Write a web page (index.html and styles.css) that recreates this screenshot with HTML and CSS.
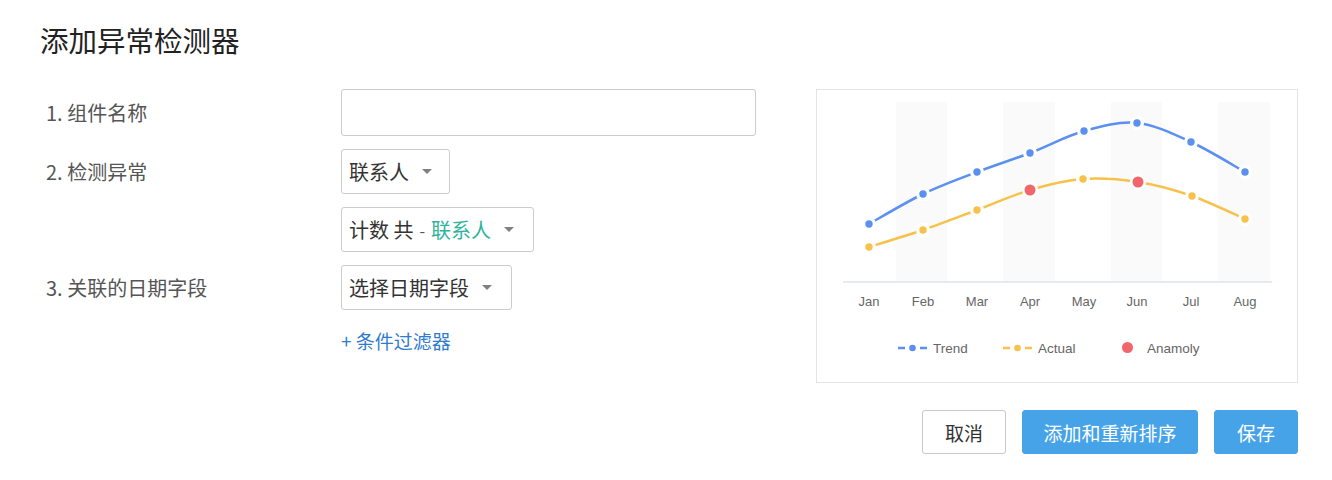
FILE: index.html
```html
<!DOCTYPE html>
<html lang="zh-CN">
<head>
<meta charset="utf-8">
<title>添加异常检测器</title>
<link rel="stylesheet" href="styles.css">
</head>
<body>
<div class="page">
  <h1 class="title">添加异常检测器</h1>
  <div class="main">
    <div class="form">
      <div class="row">
        <div class="label">1. 组件名称</div>
        <input class="text-input" type="text">
      </div>
      <div class="row">
        <div class="label">2. 检测异常</div>
        <div class="select">联系人<span class="caret"></span></div>
      </div>
      <div class="row">
        <div class="label"></div>
        <div class="select select-wide">计数 共<span class="dash">-</span><span class="green">联系人</span><span class="caret"></span></div>
      </div>
      <div class="row">
        <div class="label">3. 关联的日期字段</div>
        <div class="select select-wide">选择日期字段<span class="caret"></span></div>
      </div>
      <div class="row">
        <div class="label"></div>
        <a class="link" href="#">+ 条件过滤器</a>
      </div>
    </div>
    <div class="chart">
      <svg width="480" height="292" viewBox="817 90 480 292" xmlns="http://www.w3.org/2000/svg">
        <g fill="#fafafa">
          <rect x="896" y="102" width="51" height="180"/>
          <rect x="1003" y="102" width="52" height="180"/>
          <rect x="1111" y="102" width="51" height="180"/>
          <rect x="1218" y="102" width="52" height="180"/>
        </g>
        <line x1="843" y1="282" x2="1272" y2="282" stroke="#dfe3e9" stroke-width="1.5"/>
        <g class="axis">
          <text x="869" y="305.5">Jan</text>
          <text x="923" y="305.5">Feb</text>
          <text x="977" y="305.5">Mar</text>
          <text x="1030" y="305.5">Apr</text>
          <text x="1084" y="305.5">May</text>
          <text x="1137" y="305.5">Jun</text>
          <text x="1191" y="305.5">Jul</text>
          <text x="1245" y="305.5">Aug</text>
        </g>
        <path d="M869 224 C878 219 905 202.7 923 194 C941 185.3 959.2 178.8 977 172 C994.8 165.2 1012.2 159.8 1030 153 C1047.8 146.2 1066.2 136 1084 131 C1101.8 126 1119.2 121.2 1137 123 C1154.8 124.8 1173 133.8 1191 142 C1209 150.2 1236 167 1245 172" fill="none" stroke="#5b8ff0" stroke-width="2.5"/>
        <path d="M869 247 C878 244.2 905 236.2 923 230 C941 223.8 959.2 216.7 977 210 C994.8 203.3 1012.3 195.2 1030 190 C1047.7 184.8 1065 180.3 1083 179 C1101 177.7 1119.8 179.2 1138 182 C1156.2 184.8 1174.2 189.8 1192 196 C1209.8 202.2 1236.2 215.2 1245 219" fill="none" stroke="#f7c14a" stroke-width="2.5"/>
        <g fill="#fff">
          <circle cx="869" cy="224" r="7"/><circle cx="923" cy="194" r="7"/><circle cx="977" cy="172" r="7"/><circle cx="1030" cy="153" r="7"/>
          <circle cx="1084" cy="131" r="7"/><circle cx="1137" cy="123" r="7"/><circle cx="1191" cy="142" r="7"/><circle cx="1245" cy="172" r="7"/>
          <circle cx="869" cy="247" r="7"/><circle cx="923" cy="230" r="7"/><circle cx="977" cy="210" r="7"/><circle cx="1030" cy="190" r="8"/>
          <circle cx="1083" cy="179" r="7"/><circle cx="1138" cy="182" r="8"/><circle cx="1192" cy="196" r="7"/><circle cx="1245" cy="219" r="7"/>
        </g>
        <g fill="#5b8ff0">
          <circle cx="869" cy="224" r="3.7"/><circle cx="923" cy="194" r="3.7"/><circle cx="977" cy="172" r="3.7"/><circle cx="1030" cy="153" r="3.7"/>
          <circle cx="1084" cy="131" r="3.7"/><circle cx="1137" cy="123" r="3.7"/><circle cx="1191" cy="142" r="3.7"/><circle cx="1245" cy="172" r="3.7"/>
        </g>
        <g fill="#f7c14a">
          <circle cx="869" cy="247" r="3.7"/><circle cx="923" cy="230" r="3.7"/><circle cx="977" cy="210" r="3.7"/>
          <circle cx="1083" cy="179" r="3.7"/><circle cx="1192" cy="196" r="3.7"/><circle cx="1245" cy="219" r="3.7"/>
        </g>
        <g fill="#f0666a">
          <circle cx="1030" cy="190" r="5.5"/><circle cx="1138" cy="182" r="5.5"/>
        </g>
        <g class="legend">
          <line x1="898" y1="348" x2="905" y2="348" stroke="#5b8ff0" stroke-width="2.5"/>
          <circle cx="912.5" cy="348" r="3.3" fill="#5b8ff0"/>
          <line x1="920" y1="348" x2="927" y2="348" stroke="#5b8ff0" stroke-width="2.5"/>
          <text x="933" y="352.5">Trend</text>
          <line x1="1003" y1="348" x2="1010" y2="348" stroke="#f7c14a" stroke-width="2.5"/>
          <circle cx="1017.5" cy="348" r="3.3" fill="#f7c14a"/>
          <line x1="1025" y1="348" x2="1032" y2="348" stroke="#f7c14a" stroke-width="2.5"/>
          <text x="1038" y="352.5">Actual</text>
          <circle cx="1127.5" cy="347.5" r="5.5" fill="#f0666a"/>
          <text x="1147" y="352.5">Anamoly</text>
        </g>
      </svg>
    </div>
  </div>
  <div class="actions">
    <button class="btn btn-default" type="button">取消</button>
    <button class="btn btn-primary" type="button">添加和重新排序</button>
    <button class="btn btn-primary btn-save" type="button">保存</button>
  </div>
</div>
</body>
</html>
```

FILE: styles.css
```css
html, body {
  margin: 0;
  padding: 0;
  background: #fff;
}

body {
  font-family: "Noto Sans CJK SC", "Noto Sans", "Liberation Sans", sans-serif;
  color: #333;
}

.page {
  padding: 20px 34px 0 40px;
}

.title {
  margin: 0;
  font-size: 28.5px;
  font-weight: 400;
  line-height: 40px;
  color: #222;
}

.main {
  margin-top: 29px;
  display: flex;
  justify-content: space-between;
  align-items: flex-start;
}

.form {
  display: flex;
  flex-direction: column;
  gap: 13px;
  padding-left: 6px;
}

.row {
  display: flex;
  align-items: center;
}

.label {
  width: 295px;
  font-size: 20px;
  color: #555;
}

.text-input {
  box-sizing: border-box;
  width: 415px;
  height: 47px;
  border: 1px solid #ccc;
  border-radius: 3px;
  margin: 0;
  padding: 0 8px;
  font: inherit;
  outline: none;
}

.select {
  box-sizing: border-box;
  height: 45px;
  display: flex;
  align-items: center;
  padding: 0 17px 0 7px;
  border: 1px solid #ccc;
  border-radius: 3px;
  font-size: 20px;
  color: #333;
  white-space: nowrap;
}

.select-wide {
  padding-right: 19px;
}

.dash {
  margin: 0 6px 0 6px;
  font-size: 16px;
  color: #555;
}

.green {
  color: #2eb39c;
}

.caret {
  display: inline-block;
  width: 0;
  height: 0;
  margin-left: 13px;
  border-top: 5px solid #808080;
  border-left: 5px solid transparent;
  border-right: 5px solid transparent;
}

.link {
  font-size: 19px;
  color: #2f7bcf;
  text-decoration: none;
  margin-top: 4px;
}

.chart {
  box-sizing: border-box;
  width: 482px;
  height: 294px;
  border: 1px solid #e4e4e4;
  line-height: 0;
}

.chart svg {
  display: block;
}

.axis text {
  font-family: "Liberation Sans", Arial, sans-serif;
  font-size: 13px;
  fill: #666;
  text-anchor: middle;
}

.legend text {
  font-family: "Liberation Sans", Arial, sans-serif;
  font-size: 13.5px;
  fill: #666;
}

.actions {
  margin-top: 27px;
  display: flex;
  justify-content: flex-end;
  gap: 16px;
}

.btn {
  box-sizing: border-box;
  height: 44px;
  padding: 0;
  border-radius: 3px;
  font-family: inherit;
  font-size: 19px;
  white-space: nowrap;
  cursor: pointer;
}

.btn-default {
  width: 84px;
  background: #fff;
  border: 1px solid #c8c8c8;
  color: #333;
}

.btn-primary {
  width: 176px;
  background: #47a3e8;
  border: 1px solid #47a3e8;
  color: #fff;
}

.btn-save {
  width: 84px;
}
```
